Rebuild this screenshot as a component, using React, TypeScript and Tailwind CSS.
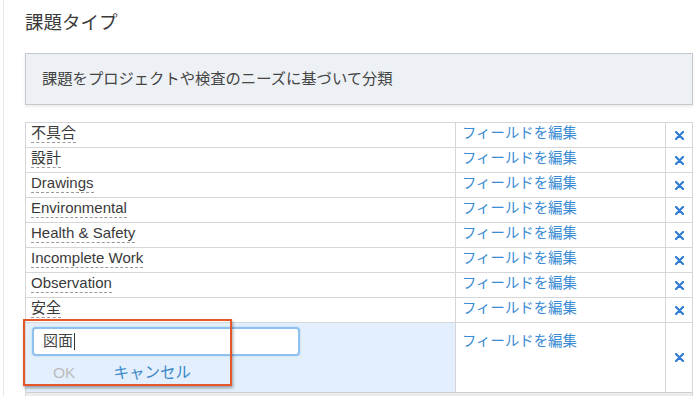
import React from "react"

const rows = [
  "不具合",
  "設計",
  "Drawings",
  "Environmental",
  "Health & Safety",
  "Incomplete Work",
  "Observation",
  "安全",
]

function RemoveIcon() {
  return (
    <svg width="9" height="9" viewBox="0 0 9 9" aria-hidden="true">
      <path
        d="M1 1 L8 8 M8 1 L1 8"
        stroke="#2f7bd6"
        strokeWidth="2.2"
        strokeLinecap="round"
      />
    </svg>
  )
}

export default function App() {
  return (
    <div
      className="relative h-[396px] w-[700px] overflow-hidden bg-white pl-[3px]"
      style={{ fontFamily: '"Liberation Sans", "Noto Sans CJK JP", sans-serif' }}
    >
      <div className="h-full border-l border-[#e8e8e8] pl-[21px] pr-[7px]">
        <h1 className="h-[53px] pt-[10px] text-[18.5px] leading-[26px] font-normal text-[#3a3a3a]">
          課題タイプ
        </h1>

        <div className="flex h-[52px] items-center border border-[#c6c9cc] bg-[#edf1f5] pl-[16px] text-[15.3px] text-[#444] shadow-[0_2px_3px_rgba(0,0,0,0.08)]">
          課題をプロジェクトや検査のニーズに基づいて分類
        </div>

        <div className="mt-[17px] border-t border-r border-l border-[#d6d6d6]">
          {rows.map((name) => (
            <div
              key={name}
              className="flex h-[25px] border-b border-[#d6d6d6]"
            >
              <div className="w-[430px] border-r border-[#d6d6d6] pl-[5px] leading-[20px]">
                <span className="inline-block border-b border-dashed border-[#9a9a9a] text-[15px] leading-[18px] text-[#3a3a3a]">
                  {name}
                </span>
              </div>
              <div className="w-[210px] border-r border-[#d6d6d6] pl-[6px] text-[14.4px] leading-[20px] text-[#3a8bd3]">
                フィールドを編集
              </div>
              <div className="flex flex-1 items-center justify-center">
                <RemoveIcon />
              </div>
            </div>
          ))}

          <div className="flex h-[70px] border-b border-[#cfcfcf]">
            <div className="w-[430px] border-r border-[#d6d6d6] bg-[#e3effc] pt-[4px] pl-[6px]">
              <div className="flex h-[29px] w-[268px] items-center rounded-[4px] border-2 border-[#8fc1ef] bg-white pl-[9px] text-[15px] text-[#444] shadow-[0_0_2px_rgba(90,160,230,0.4)]">
                図面
                <span className="ml-[1px] inline-block h-[17px] w-px bg-[#333]" />
              </div>
              <div className="mt-[7px] flex items-center text-[15.5px] leading-[20px]">
                <span className="ml-[21px] text-[#bdbdbd]">OK</span>
                <span className="ml-[38px] text-[#3a87c8]">キャンセル</span>
              </div>
            </div>
            <div className="w-[210px] border-r border-[#d6d6d6] pt-[7px] pl-[6px] text-[14.4px] leading-[22px] text-[#3a8bd3]">
              フィールドを編集
            </div>
            <div className="flex flex-1 items-center justify-center">
              <RemoveIcon />
            </div>
          </div>
          <div className="h-[10px] bg-[#ececec]" />
        </div>
      </div>

      <div className="pointer-events-none absolute top-[319px] left-[23px] h-[67px] w-[209px] border-2 border-[#e4572a] shadow-[1px_2px_3px_rgba(0,0,0,0.35)]" />
    </div>
  )
}
